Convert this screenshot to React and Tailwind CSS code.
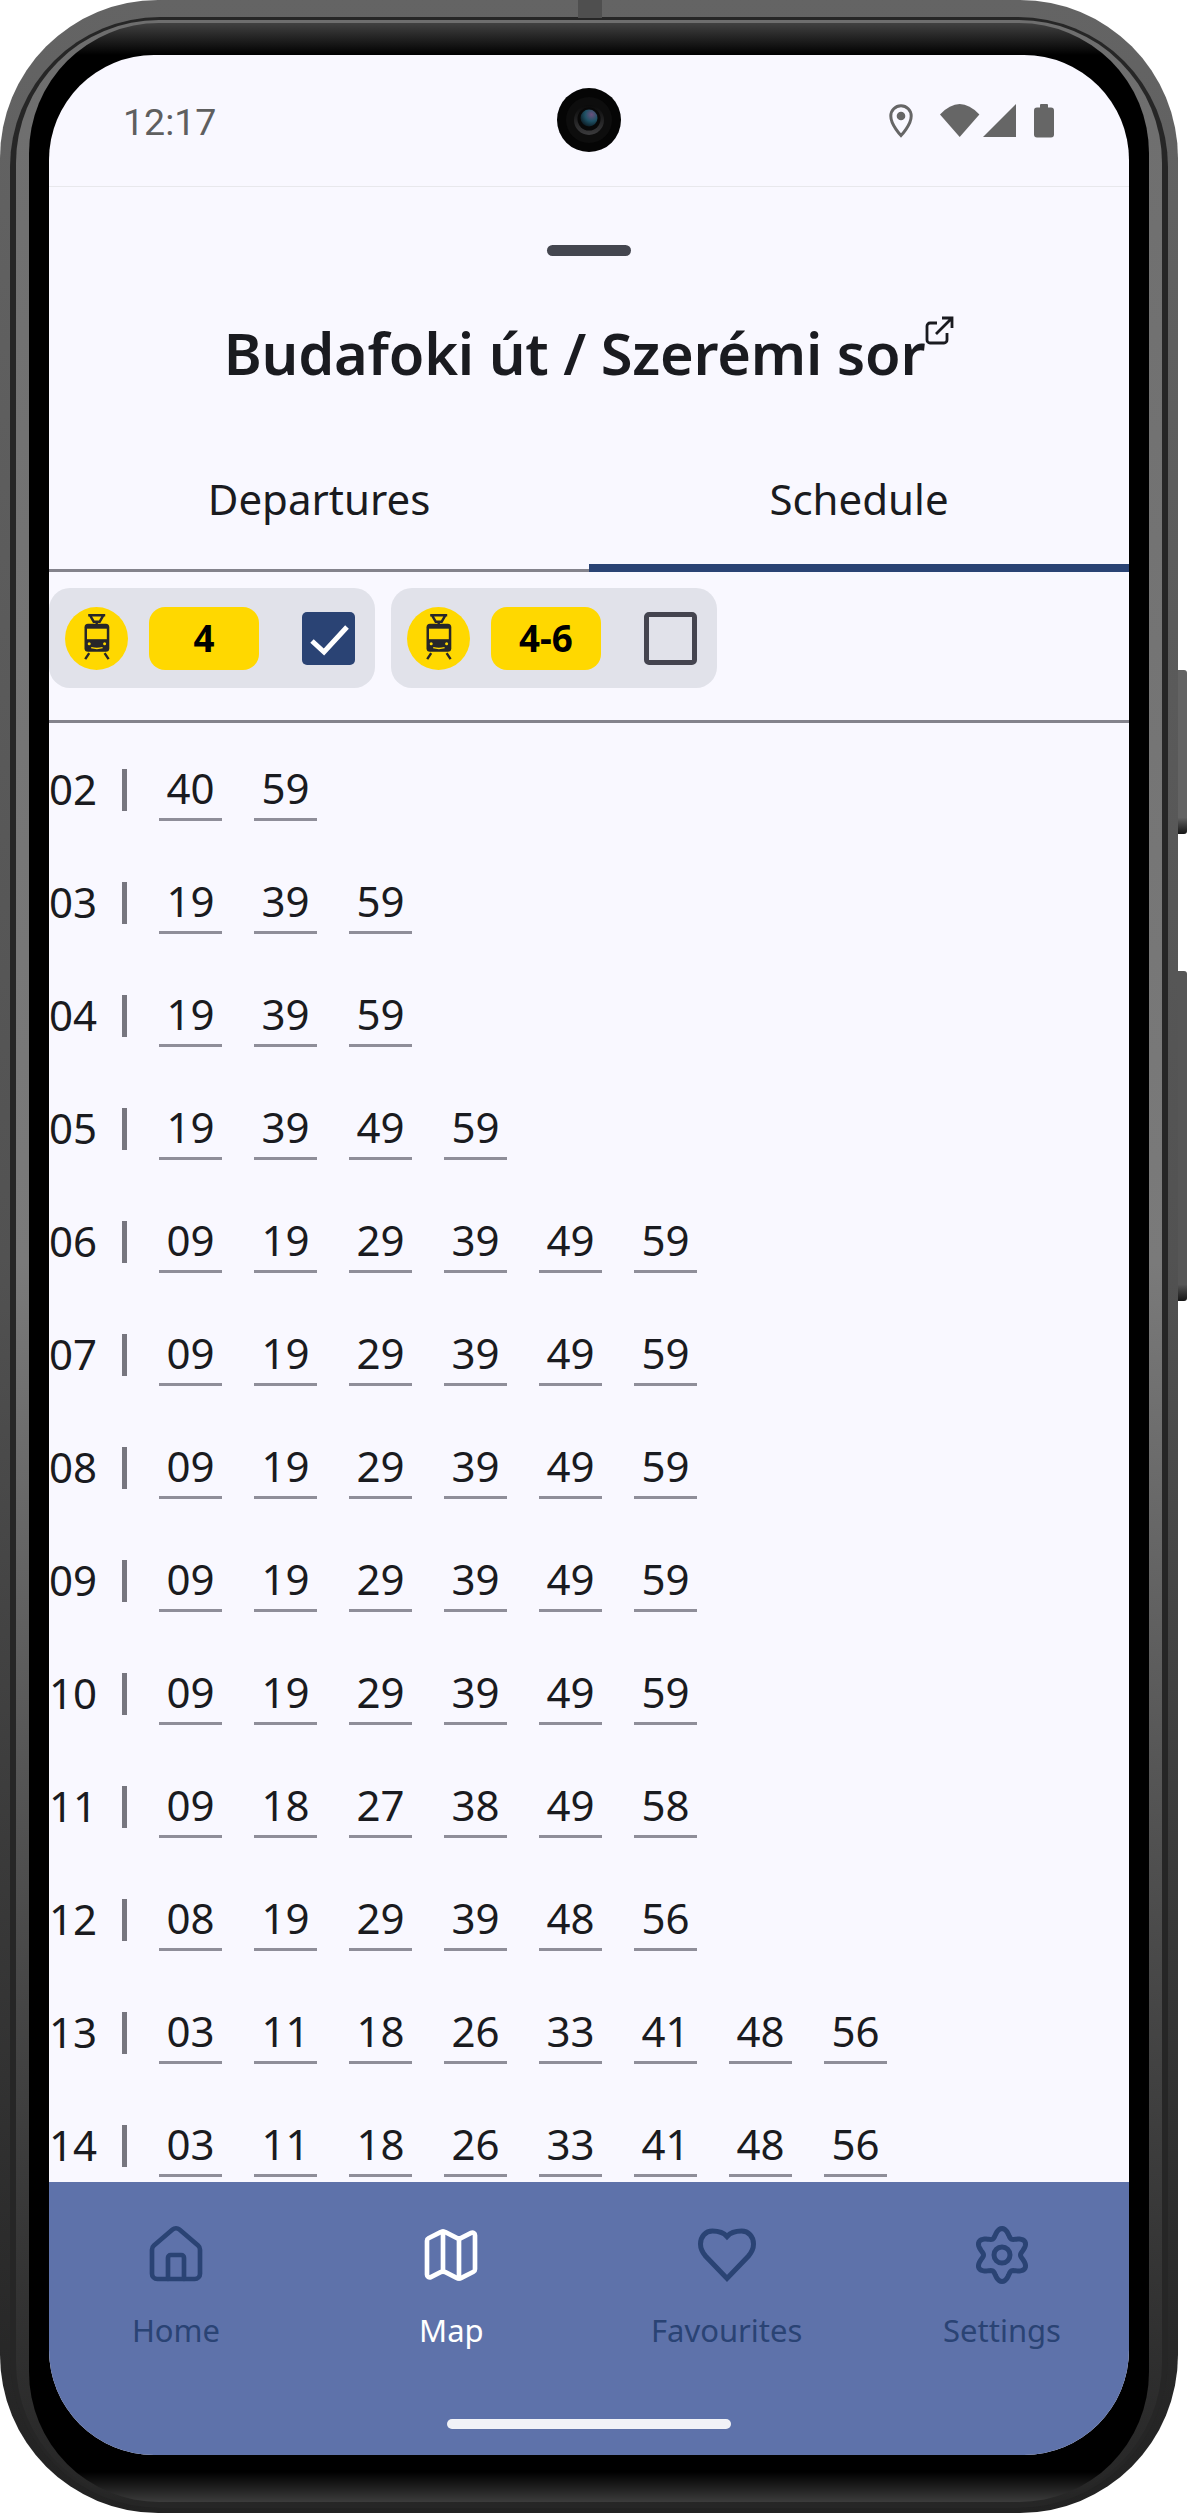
import { House, Map as MapIcon } from "lucide-react";

const rows = [
  ["02", ["40", "59"]],
  ["03", ["19", "39", "59"]],
  ["04", ["19", "39", "59"]],
  ["05", ["19", "39", "49", "59"]],
  ["06", ["09", "19", "29", "39", "49", "59"]],
  ["07", ["09", "19", "29", "39", "49", "59"]],
  ["08", ["09", "19", "29", "39", "49", "59"]],
  ["09", ["09", "19", "29", "39", "49", "59"]],
  ["10", ["09", "19", "29", "39", "49", "59"]],
  ["11", ["09", "18", "27", "38", "49", "58"]],
  ["12", ["08", "19", "29", "39", "48", "56"]],
  ["13", ["03", "11", "18", "26", "33", "41", "48", "56"]],
  ["14", ["03", "11", "18", "26", "33", "41", "48", "56"]],
];

// six soft lobes, same outline as the settings icon
const gearPath =
  Array.from({ length: 120 }, (_, i) => {
    const a = (i / 120) * Math.PI * 2;
    const r = 22.5 + 4 * Math.cos(6 * a);
    const x = 41 + r * Math.sin(a);
    const y = 41 - r * Math.cos(a);
    return `${i === 0 ? "M" : "L"}${x.toFixed(2)} ${y.toFixed(2)}`;
  }).join(" ") + " Z";

const TramIcon = () => (
  <svg width="63" height="63" viewBox="4.8 6.8 63 63" className="shrink-0">
    <circle cx="36.3" cy="38.3" r="31.5" fill="#ffd800" />
    <path d="M28 15h17M30 15.5l3.5 6h6l3.5-6M36.5 21v3" fill="none" stroke="#26262a" strokeWidth="2.4" />
    <rect x="24.3" y="23.5" width="24.8" height="28" rx="3.5" fill="#26262a" />
    <rect x="26.8" y="28.5" width="19.8" height="10.5" fill="#ffd800" />
    <circle cx="29" cy="43.5" r="1.5" fill="#ffd800" />
    <circle cx="44.4" cy="43.5" r="1.5" fill="#ffd800" />
    <path d="M31 47.5q5.7 1.6 11.4 0" fill="none" stroke="#ffd800" strokeWidth="1.4" />
    <path d="M29 53l-4 6M44.4 53l4 6" fill="none" stroke="#26262a" strokeWidth="2.4" />
  </svg>
);

const LineChip = ({ label, checked }) => (
  <div className="flex h-[100px] w-[326px] items-center rounded-[21px] bg-[#e1e2ea] pl-[16px]">
    <TramIcon />
    <div className="ml-[21px] flex h-[63px] w-[110px] items-center justify-center rounded-[16px] bg-[#ffd800] text-[36.75px] leading-none font-bold text-black">
      {label}
    </div>
    {checked ? (
      <div className="ml-[43px] h-[53px] w-[53px] rounded-[5px] bg-[#2a4374]">
        <svg width="53" height="53" viewBox="0 0 53 53">
          <path d="M10 29l12 11L45 15" fill="none" stroke="white" strokeWidth="5" />
        </svg>
      </div>
    ) : (
      <div className="ml-[43px] h-[53px] w-[53px] rounded-[5px] border-[5px] border-[#44444f]" />
    )}
  </div>
);

const ScheduleRow = ({ hour, minutes }) => (
  <div className="flex h-[113px] items-center text-[42px] text-[#1a1b20]">
    <span className="mb-[2px] w-[73px] leading-[46px]">{hour}</span>
    <div className="h-[42px] w-[5px] bg-[#77767f]" />
    <div className="ml-[32px] flex gap-[32px]">
      {minutes.map((m, i) => (
        <span
          key={i}
          className="mt-[9px] h-[53px] w-[63px] border-b-[3px] border-[#8f8e99] text-center leading-[40px]"
        >
          {m}
        </span>
      ))}
    </div>
  </div>
);

const NavItem = ({ label, active, children }) => (
  <div className={`flex w-[254px] flex-col items-center ${active ? "text-white" : "text-[#2a4374]"}`}>
    <div className="h-[64px] w-[64px]">{children}</div>
    <span className="mt-[23px] text-[31px] leading-[40px]">{label}</span>
  </div>
);

export default function App() {
  return (
    <div className="relative h-[2513px] w-[1187px] bg-white font-['Noto_Sans',sans-serif]">
      {/* side buttons */}
      <div className="absolute top-[670px] left-[1178px] h-[164px] w-[9px] rounded-r-[3px] bg-linear-to-b from-[#636363] via-[#636363] via-90% to-[#161616]" />
      <div className="absolute top-[971px] left-[1178px] h-[330px] w-[9px] rounded-r-[3px] bg-linear-to-b from-[#565656] via-[#565656] via-95% to-[#161616]" />

      {/* phone frame */}
      <div className="relative h-full w-[1178px] rounded-[158px] bg-linear-to-b from-[#646464] via-[#525252] to-[#222222] px-[10px] pt-[17px] pb-[5px]">
        {/* antenna break on the top edge */}
        <div className="absolute top-0 left-[578px] h-[18px] w-[24px] bg-[#4f4f4f]" />
        <div className="h-full rounded-[150px] bg-[#262626] px-[6px] pt-[3px] pb-[3px]">
          <div className="h-full rounded-[143px] bg-linear-to-b from-[#6e6e6e] via-[#7a7a7a] to-[#262626] px-[13px] pt-[3px] pb-[3px]">
            <div className="h-full rounded-[130px] bg-[linear-gradient(to_bottom,#414141_0px,#000_32px,#000_calc(100%-30px),#3c3c3c_100%)] px-[20px] pt-[32px] pb-[47px]">
              {/* screen */}
              <div className="relative flex h-[2400px] w-[1080px] flex-col overflow-hidden rounded-[105px] bg-[#f9f8ff]">
                {/* status bar */}
                <div className="flex h-[132px] shrink-0 items-start justify-between border-b border-[#e8e8ec] pt-[47px] pr-[75px] pl-[74px]">
                  <span className="font-['Roboto',sans-serif] text-[37.5px] leading-[40px] text-[#5f5f5f]">12:17</span>
                  <div className="mt-[2px] flex items-start">
                    <svg width="24" height="34" viewBox="0 0 24 34">
                      <path d="M12 31.5C12 31.5 1.8 21 1.8 12a10.2 10.2 0 0 1 20.4 0C22.2 21 12 31.5 12 31.5Z" fill="none" stroke="#666" strokeWidth="3" />
                      <circle cx="12" cy="12" r="4.3" fill="#666" />
                    </svg>
                    <svg width="40" height="33" viewBox="0 0 40 33" className="ml-[27px]">
                      <path d="M0 10.5Q19.7-10.5 39.4 10.5L19.7 33Z" fill="#666" />
                    </svg>
                    <svg width="33" height="33" viewBox="0 0 33 33" className="ml-[3px]">
                      <path d="M0 33L33 0V33Z" fill="#666" />
                    </svg>
                    <svg width="20" height="34" viewBox="0 0 20 34" className="ml-[18px]">
                      <rect x="0" y="3.5" width="20" height="30" rx="3" fill="#666" />
                      <rect x="6" y="0" width="8" height="6" rx="1" fill="#666" />
                    </svg>
                  </div>
                </div>

                {/* front camera */}
                <svg width="64" height="64" viewBox="0 0 64 64" className="absolute top-[33px] left-[508px]">
                  <defs>
                    <radialGradient id="lens" cx="0.65" cy="0.3" r="0.85">
                      <stop offset="0" stopColor="#6a4f7c" />
                      <stop offset="0.45" stopColor="#1f5266" />
                      <stop offset="1" stopColor="#070d12" />
                    </radialGradient>
                    <linearGradient id="ring" x1="0" y1="0" x2="0" y2="1">
                      <stop offset="0" stopColor="#0a0a0a" />
                      <stop offset="1" stopColor="#3a3a3c" />
                    </linearGradient>
                  </defs>
                  <circle cx="32" cy="32" r="32" fill="#050505" />
                  <circle cx="32" cy="32" r="23" fill="#0d0d0d" />
                  <circle cx="32" cy="32" r="15" fill="url(#ring)" />
                  <circle cx="32" cy="31" r="11.5" fill="#080808" />
                  <circle cx="32" cy="30" r="8.5" fill="url(#lens)" />
                </svg>

                {/* drag handle */}
                <div className="mx-auto mt-[58px] h-[11px] w-[84px] shrink-0 rounded-full bg-[#44464f]" />

                {/* title */}
                <div className="mt-[58px] flex shrink-0 items-start justify-center text-[#1a1b20]">
                  <h1 className="text-[57.75px] leading-[78px] font-semibold tracking-[-0.25px]">Budafoki út / Szerémi sor</h1>
                  <svg width="29" height="29" viewBox="0 0 29 29" className="mt-[2px] shrink-0" fill="none" stroke="#1a1b20" strokeWidth="2.8">
                    <path d="M12 7H5a3 3 0 0 0-3 3v14a3 3 0 0 0 3 3h14a3 3 0 0 0 3-3v-7" />
                    <path d="M11 18L27 2M17 2H27V12" />
                  </svg>
                </div>

                {/* tabs */}
                <div className="mt-[38px] flex h-[142px] shrink-0 text-[42px] text-[#1a1b20]">
                  <div className="flex flex-1 items-center justify-center border-b-[3px] border-[#84838c] pb-[2px]">Departures</div>
                  <div className="flex flex-1 items-center justify-center border-b-[8px] border-[#2a4374] pt-[3px]">Schedule</div>
                </div>

                {/* line filter */}
                <div className="flex shrink-0 gap-[16px] border-b-[3px] border-[#84838c] pt-[16px] pb-[32px]">
                  <LineChip label="4" checked />
                  <LineChip label="4-6" />
                </div>

                {/* schedule */}
                <div className="min-h-0 flex-1 overflow-hidden pt-[10px]">
                  {rows.map(([hour, minutes]) => (
                    <ScheduleRow key={hour} hour={hour} minutes={minutes} />
                  ))}
                </div>

                {/* bottom nav */}
                <div className="h-[273px] shrink-0 bg-[#5e72aa] pt-[41px]">
                  <div className="flex justify-between">
                    <NavItem label="Home">
                      <House size={64} strokeWidth={1.75} />
                    </NavItem>
                    <NavItem label="Map" active>
                      <MapIcon size={64} strokeWidth={1.75} />
                    </NavItem>
                    <NavItem label="Favourites">
                      <svg width="64" height="64" viewBox="4.5 8.5 64 64" fill="none" stroke="currentColor" strokeWidth="5">
                        <path d="M36.5 22C33 18 27 16.5 22 16.5C15 16.5 10 22 10 29.5C10 34 12 38 15 41.5L36.5 64L58 41.5C61 38 63 34 63 29.5C63 22 58 16.5 51 16.5C46 16.5 40 18 36.5 22Z" />
                      </svg>
                    </NavItem>
                    <NavItem label="Settings">
                      <svg width="64" height="64" viewBox="9 9 64 64" fill="none" stroke="currentColor" strokeWidth="5">
                        <path d={gearPath} />
                        <circle cx="41" cy="41" r="8" />
                      </svg>
                    </NavItem>
                  </div>
                  <div className="mx-auto mt-[69px] h-[10px] w-[284px] rounded-full bg-[#f1f2f7]" />
                </div>
              </div>
            </div>
          </div>
        </div>
      </div>
    </div>
  );
}
